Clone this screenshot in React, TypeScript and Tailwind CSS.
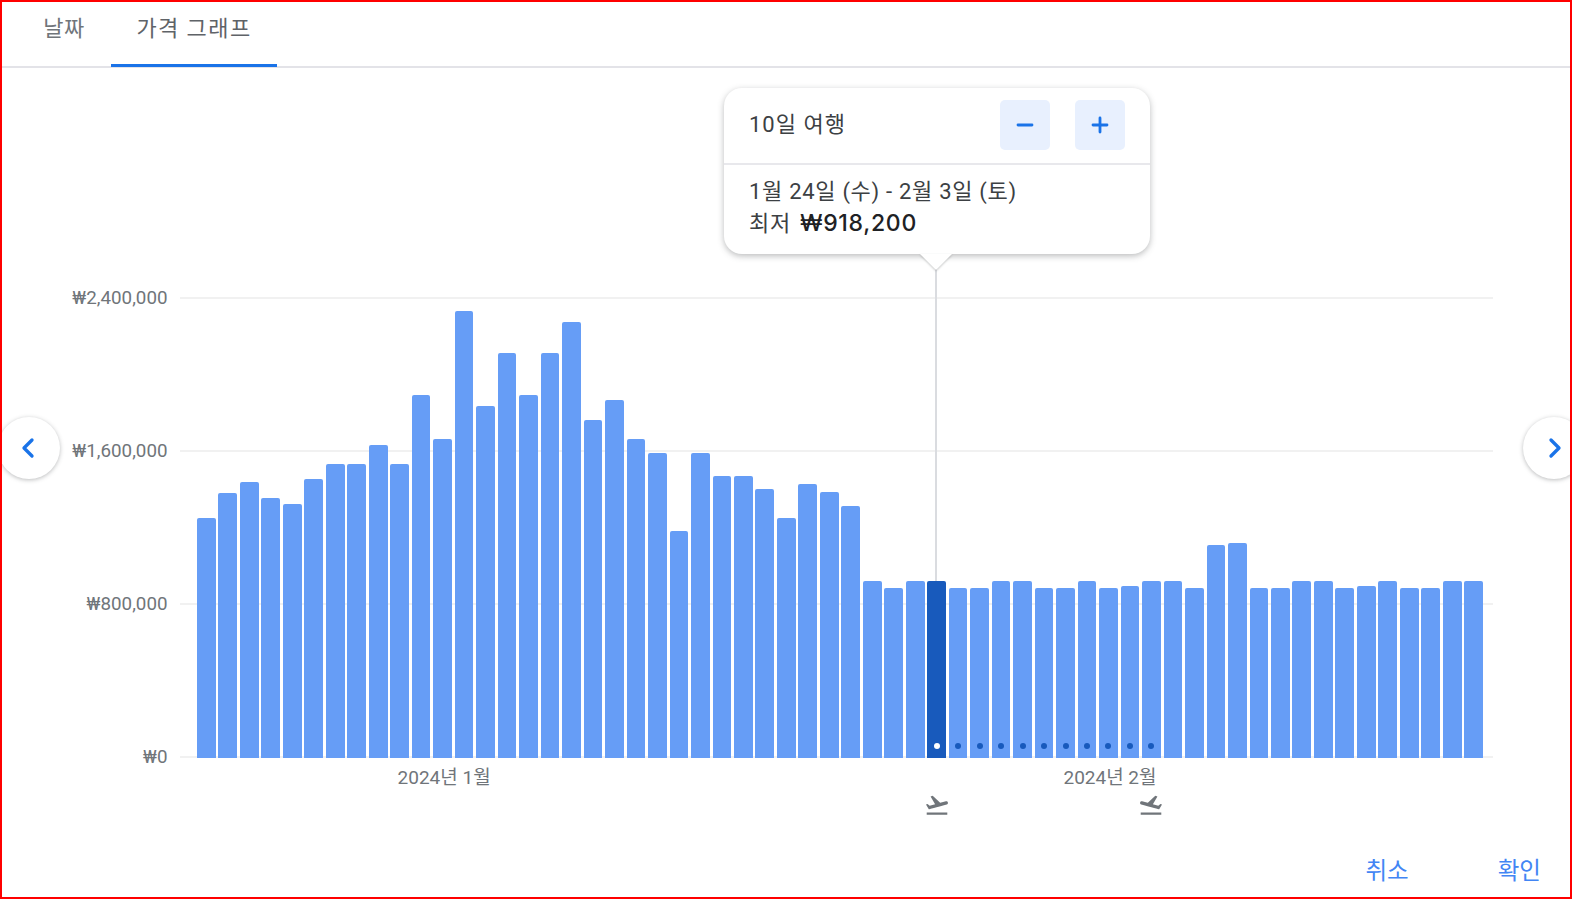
import { ChevronLeft, ChevronRight, Minus, Plus } from "lucide-react"
import { MdFlightTakeoff } from "react-icons/md"

// bar tops in px, read off the reference
const BAR_TOPS = [
  519, 494, 483, 499, 505, 480, 465, 465, 446, 465, 396, 440, 312, 407, 354, 396, 354, 323, 421, 401,
  440, 454, 532, 454, 477, 477, 490, 519, 485, 493, 507, 582, 589, 582, 582, 589, 589, 582, 582, 589,
  589, 582, 589, 587, 582, 582, 589, 546, 544, 589, 589, 582, 582, 589, 587, 582, 589, 589, 582, 582,
]
const BASELINE = 759.5
const SELECTED = 34
const TRIP_DAYS = 10
const Y_LABELS = ["₩2,400,000", "₩1,600,000", "₩800,000", "₩0"]

const FONT = "font-['Roboto','Noto_Sans_CJK_KR',sans-serif]"

function Bar({ index, top }: { index: number; top: number }) {
  const selected = index === SELECTED
  const inTrip = index > SELECTED && index <= SELECTED + TRIP_DAYS
  return (
    <div
      className={`relative flex items-end justify-center rounded-t-[2px] pb-[9px] ${selected ? "bg-[#185abc]" : "bg-[#669df6]"}`}
      style={{ height: BASELINE - top }}
    >
      {selected && <span className="absolute bottom-full left-[7.5px] h-[312px] w-[2px] bg-[#dadce0]" />}
      {selected && <span className="h-[6px] w-[6px] rounded-full bg-white" />}
      {inTrip && <span className="h-[6px] w-[6px] rounded-full bg-[#185abc]" />}
    </div>
  )
}

function StepButton({ children }: { children: React.ReactNode }) {
  return (
    <button className="flex h-[50px] w-[50px] items-center justify-center rounded-[5px] bg-[#e8f0fe] text-[#1a73e8]">
      {children}
    </button>
  )
}

export default function App() {
  return (
    <div className={`box-border flex h-[899px] w-[1572px] flex-col overflow-hidden border-2 border-[#ff0000] bg-white ${FONT}`}>
      {/* Tabs */}
      <div className="flex h-[66px] shrink-0 items-start border-b-2 border-[#e3e3e8] pl-[15px]">
        <div className="flex h-[52px] w-[94px] items-center justify-center text-[22px] tracking-[0.5px] text-[#70757a]">날짜</div>
        <div className="relative flex h-[64px] w-[166px] justify-center pt-[11px] text-[22px] leading-[32px] tracking-[1.4px] text-[#5f6368]">
          가격 그래프
          <span className="absolute bottom-[-1px] left-0 right-0 h-[3px] bg-[#1a73e8]" />
        </div>
      </div>

      {/* Chart */}
      <div className="relative flex min-h-0 flex-1 flex-col pt-[229px]">
        <div className="flex h-[461px] shrink-0 gap-[12.5px]">
          {/* Y axis */}
          <div className="flex w-[165.5px] flex-col justify-between text-[18.8px] text-[#70757a]">
            {Y_LABELS.map((label) => (
              <span key={label} className="flex h-[2px] items-center justify-end whitespace-nowrap">
                {label}
              </span>
            ))}
          </div>

          {/* Plot */}
          <div className="relative w-[1313px]">
            <div className="absolute inset-0 flex flex-col justify-between">
              {Y_LABELS.map((label) => (
                <div key={label} className="h-[2px] bg-[#f1f1f1]" />
              ))}
            </div>
            <div className="relative grid h-full grid-cols-[repeat(60,minmax(0,1fr))] items-end gap-x-[2.8px] pl-[17px] pr-[10px]">
              {BAR_TOPS.map((top, i) => (
                <Bar key={i} index={i} top={top} />
              ))}
            </div>
          </div>
        </div>

        {/* Month labels and trip markers share the bars' columns */}
        <div className="ml-[195px] grid w-[1286px] grid-cols-[repeat(60,minmax(0,1fr))] gap-x-[2.8px] pt-[8px] text-[#70757a]">
          <span className="col-start-12 row-start-1 ml-[3px] justify-self-center whitespace-nowrap text-[19px] leading-[24px]">2024년 1월</span>
          <span className="col-start-43 row-start-1 ml-[3px] justify-self-center whitespace-nowrap text-[19px] leading-[24px]">2024년 2월</span>
          <MdFlightTakeoff className="col-start-35 row-start-2 mt-[2px] justify-self-center text-[26px]" />
          <MdFlightTakeoff className="col-start-45 row-start-2 mt-[2px] -scale-x-100 justify-self-center text-[26px]" />
        </div>

        {/* Footer actions */}
        <div className="mt-auto flex justify-end gap-[89px] pb-[10px] pr-[29px] text-[23.5px] leading-[32px] text-[#4285f4]">
          <button>취소</button>
          <button>확인</button>
        </div>

        {/* Tooltip */}
        <div className="absolute left-[722px] top-[20px] w-[426px] rounded-[18px] bg-white shadow-[0_2px_6px_rgba(60,64,67,0.35)]">
          <div className="flex h-[77px] items-center justify-between border-b-2 border-[#e8e8ec] pb-px pl-[25px] pr-[25.5px]">
            <span className="mb-[2px] text-[22px] tracking-[1px] text-[#3c4043]">10일 여행</span>
            <div className="flex gap-[25px]">
              <StepButton>
                <Minus size={24} strokeWidth={2.8} />
              </StepButton>
              <StepButton>
                <Plus size={24} strokeWidth={2.8} />
              </StepButton>
            </div>
          </div>
          <div className="px-[25px] pb-[14px] pt-[11px] text-[22px] leading-[32px] tracking-[0.7px] text-[#3c4043]">
            <div>1월 24일 (수) - 2월 3일 (토)</div>
            <div className="-mt-px">
              최저
              <span className="ml-[9px] font-['Inter',sans-serif] text-[23px] font-medium tracking-[0.7px] text-[#202124]">₩918,200</span>
            </div>
          </div>
          <span className="absolute bottom-[-16px] left-[196px] h-0 w-0 border-x-[16px] border-t-[16px] border-x-transparent border-t-white drop-shadow-[0_1px_1px_rgba(60,64,67,0.3)]" />
        </div>

        {/* Carousel arrows */}
        <button className="absolute left-[-4px] top-[349px] flex h-[62px] w-[62px] items-center justify-center rounded-full bg-white pr-[2px] text-[#1a73e8] shadow-[0_1px_4px_rgba(60,64,67,0.35)]">
          <ChevronLeft size={32} strokeWidth={2.5} />
        </button>
        <button className="absolute left-[1521px] top-[349px] flex h-[62px] w-[62px] items-center justify-center rounded-full bg-white pl-[2px] text-[#1a73e8] shadow-[0_1px_4px_rgba(60,64,67,0.35)]">
          <ChevronRight size={32} strokeWidth={2.5} />
        </button>
      </div>
    </div>
  )
}
